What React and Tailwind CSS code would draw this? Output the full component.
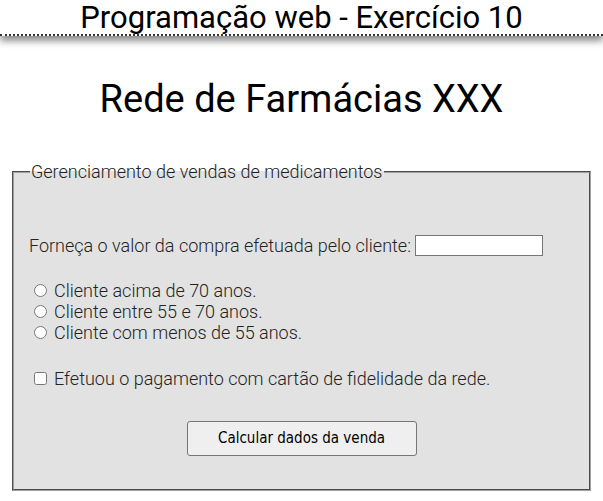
import { useState } from "react";

const App = () => {
  const [valor, setValor] = useState("");
  const [faixa, setFaixa] = useState("");
  const [fidelidade, setFidelidade] = useState(false);

  const faixas = [
    { id: "acima70", label: "Cliente acima de 70 anos." },
    { id: "entre55e70", label: "Cliente entre 55 e 70 anos." },
    { id: "menos55", label: "Cliente com menos de 55 anos." },
  ];

  return (
    <div className="min-h-screen bg-white text-black font-['Roboto',sans-serif]">
      <header className="h-[36px] border-b-2 border-dotted border-[#333] shadow-[0_5px_7px_rgba(0,0,0,0.45)] text-center text-[31px] leading-[36px]">
        Programação web - Exercício 10
      </header>

      <h1 className="mt-[40px] text-center text-[38px] leading-[46px]">Rede de Farmácias XXX</h1>

      <fieldset className="mx-[12px] mt-[36px] h-[333px] border-2 [border-style:groove] border-[#a0a0a0] bg-[#e2e2e2] px-[15px] font-light text-[18px] text-[#222]">
        <legend className="ml-[1px] px-[1px] font-light">Gerenciamento de vendas de medicamentos</legend>

        <div className="mt-[47px] flex items-center">
          <span>Forneça o valor da compra efetuada pelo cliente:</span>
          <input
            type="text"
            value={valor}
            onChange={(e) => setValor(e.target.value)}
            className="ml-[4px] h-[21px] w-[128px] border border-[#767676] bg-white px-1 text-[14px] outline-none"
          />
        </div>

        <div className="mt-[21px] flex flex-col">
          {faixas.map((f) => (
            <label key={f.id} className="flex h-[21px] items-center">
              <input
                type="radio"
                name="faixa"
                checked={faixa === f.id}
                onChange={() => setFaixa(f.id)}
                className="ml-[5px] mr-[7px] h-[13px] w-[13px]"
              />
              {f.label}
            </label>
          ))}
        </div>

        <label className="mt-[25px] flex h-[21px] items-center">
          <input
            type="checkbox"
            checked={fidelidade}
            onChange={(e) => setFidelidade(e.target.checked)}
            className="ml-[5px] mr-[7px] h-[13px] w-[13px]"
          />
          Efetuou o pagamento com cartão de fidelidade da rede.
        </label>

        <div className="mt-[32px] flex justify-center">
          <button
            type="button"
            className="h-[35px] w-[230px] rounded-[3px] border border-[#767676] bg-[#efefef] font-['DejaVu_Sans_Condensed',sans-serif] text-[15px] font-normal text-black"
          >
            Calcular dados da venda
          </button>
        </div>
      </fieldset>
    </div>
  );
};

export default App;
